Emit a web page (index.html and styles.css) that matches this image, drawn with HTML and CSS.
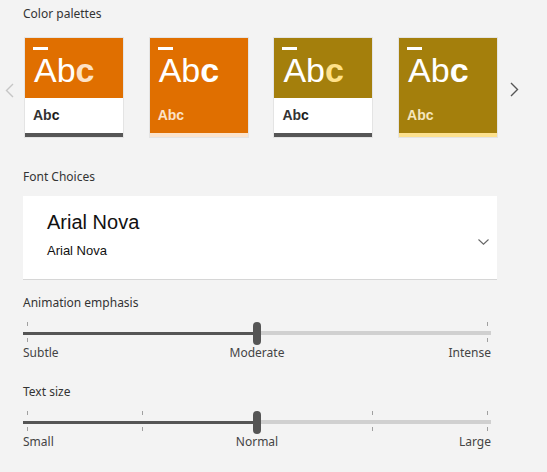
FILE: index.html
```html
<!DOCTYPE html>
<html>
<head>
<meta charset="utf-8">
<link rel="stylesheet" href="styles.css">
</head>
<body>
<div class="page">
  <div class="label">Color palettes</div>
  <div class="carousel">
    <div class="nav prev">
      <svg width="9" height="15" viewBox="0 0 9 15"><path d="M8 1 L1.5 7.5 L8 14" fill="none" stroke="#c6c6c6" stroke-width="1.4"/></svg>
    </div>
    <div class="cards">
      <div class="card">
        <div class="card-top orange">
          <div class="overline"></div>
          <div class="big">Ab<b class="c-peach">c</b></div>
        </div>
        <div class="card-bottom white"><span class="ab-dark">Ab</span><span class="c-dark">c</span></div>
        <div class="bar dark"></div>
      </div>
      <div class="card">
        <div class="card-top orange">
          <div class="overline"></div>
          <div class="big">Ab<b>c</b></div>
        </div>
        <div class="card-bottom orange"><span class="ab-peach">Ab</span><span class="ab-peach">c</span></div>
        <div class="bar peach"></div>
      </div>
      <div class="card">
        <div class="card-top olive">
          <div class="overline"></div>
          <div class="big">Ab<b class="c-yellow">c</b></div>
        </div>
        <div class="card-bottom white"><span class="ab-dark">Ab</span><span class="c-dark">c</span></div>
        <div class="bar dark"></div>
      </div>
      <div class="card">
        <div class="card-top olive">
          <div class="overline"></div>
          <div class="big">Ab<b>c</b></div>
        </div>
        <div class="card-bottom olive"><span class="ab-cream">Ab</span><span class="ab-cream">c</span></div>
        <div class="bar yellow"></div>
      </div>
    </div>
    <div class="nav next">
      <svg width="9" height="15" viewBox="0 0 9 15"><path d="M1 1 L7.5 7.5 L1 14" fill="none" stroke="#555" stroke-width="1.4"/></svg>
    </div>
  </div>

  <div class="label sec-font">Font Choices</div>
  <div class="font-card">
    <div class="fc-text">
      <div class="fc-big">Arial Nova</div>
      <div class="fc-small">Arial Nova</div>
    </div>
    <svg class="fc-chev" width="11" height="6" viewBox="0 0 11 6"><path d="M0.5 0.5 L5.5 5.2 L10.5 0.5" fill="none" stroke="#666" stroke-width="1.1"/></svg>
  </div>

  <div class="label sec-anim">Animation emphasis</div>
  <div class="slider">
    <div class="ticks top"><span class="tick"></span><span class="tick"></span></div>
    <div class="track"><div class="fill"></div><div class="rest"></div></div>
    <div class="ticks bottom"><span class="tick"></span><span class="tick"></span></div>
    <div class="thumb"></div>
  </div>
  <div class="slider-labels"><span class="sl-left">Subtle</span><span class="sl-mid">Moderate</span><span class="sl-right">Intense</span></div>

  <div class="label sec-text">Text size</div>
  <div class="slider">
    <div class="ticks top"><span class="tick"></span><span class="tick"></span><span class="tick"></span><span class="tick"></span><span class="tick"></span></div>
    <div class="track"><div class="fill"></div><div class="rest"></div></div>
    <div class="ticks bottom"><span class="tick"></span><span class="tick"></span><span class="tick"></span><span class="tick"></span><span class="tick"></span></div>
    <div class="thumb"></div>
  </div>
  <div class="slider-labels"><span class="sl-left">Small</span><span class="sl-mid">Normal</span><span class="sl-right">Large</span></div>
</div>
</body>
</html>
```
FILE: styles.css
```css
html, body {
  margin: 0;
  padding: 0;
  background: #f3f3f3;
}
body {
  width: 547px;
  height: 472px;
  overflow: hidden;
  font-family: "Noto Sans", "Open Sans", sans-serif;
}
.page {
  padding: 6px 0 0 23px;
}
.label {
  font-size: 12px;
  line-height: 16px;
  color: #333;
}
.carousel {
  display: flex;
  align-items: center;
  margin: 16px 0 0 -23px;
  height: 99px;
}
.nav {
  display: flex;
  align-items: center;
  height: 99px;
}
.prev {
  width: 25px;
  padding-left: 5px;
  box-sizing: border-box;
  margin-top: 5px;
}
.next {
  margin-left: 13px;
  margin-top: 4px;
}
.cards {
  display: flex;
  gap: 26.7px;
}
.card {
  width: 98px;
  height: 99px;
  display: flex;
  flex-direction: column;
  box-shadow: 0 0 0 1px rgba(0,0,0,0.06);
}
.card-top {
  height: 60px;
  box-sizing: border-box;
  padding: 9px 0 0 8px;
}
.overline {
  width: 15px;
  height: 3px;
  background: #fff;
}
.big {
  font-family: "Liberation Sans", Arial, sans-serif;
  font-size: 34px;
  line-height: 34px;
  margin: 3px 0 0 1px;
  color: #fff;
}
.big b { font-weight: 700; }
.card-bottom {
  height: 35px;
  box-sizing: border-box;
  padding: 9px 0 0 8px;
  font-family: "Liberation Sans", Arial, sans-serif;
  font-size: 14px;
  line-height: 16px;
  font-weight: 700;
}
.bar { height: 4px; }
.orange { background: #e06f00; }
.olive { background: #a47f0c; }
.white { background: #fff; }
.dark { background: #565656; }
.peach { background: #fce3cb; }
.yellow { background: #fde18e; }
.c-peach { color: #fde2c7; }
.c-yellow { color: #ffe18a; }
.ab-dark { color: #333; }
.c-dark { color: #1a1a1a; }
.ab-peach { color: #fbe2c9; }
.ab-cream { color: #f5e6bd; }

.sec-font { margin-top: 32px; }
.font-card {
  margin-top: 11px;
  width: 474px;
  height: 84px;
  box-sizing: border-box;
  background: #fff;
  border-bottom: 1px solid #d6d6d6;
  display: flex;
  justify-content: space-between;
  align-items: flex-start;
  padding: 14px 8px 0 24px;
}
.fc-big {
  font-family: "Liberation Sans", Arial, sans-serif;
  font-size: 20px;
  line-height: 24px;
  color: #111;
}
.fc-small {
  font-family: "Liberation Sans", Arial, sans-serif;
  font-size: 13px;
  line-height: 16px;
  color: #111;
  margin-top: 8.5px;
}
.fc-chev { margin-top: 29px; }

.sec-anim { margin-top: 15px; }
.sec-text { margin-top: 23px; }
.slider {
  position: relative;
  width: 468px;
  height: 23px;
  margin-top: 11px;
}
.ticks {
  display: flex;
  justify-content: space-between;
  padding: 0 3px 0 4px;
  height: 4px;
}
.ticks.top { margin-top: 1px; }
.ticks.bottom { margin-top: 3px; }
.tick {
  width: 1px;
  height: 4px;
  background: #a0a0a0;
}
.track {
  display: flex;
  align-items: center;
  height: 4px;
  margin-top: 5px;
}
.fill {
  width: 50%;
  height: 3px;
  background: #555;
}
.rest {
  flex: 1;
  height: 4px;
  background: #d0d0d0;
}
.thumb {
  position: absolute;
  left: 230px;
  top: 0;
  width: 8px;
  height: 23px;
  border-radius: 4px;
  background: #555;
}
.slider-labels {
  width: 468px;
  display: grid;
  grid-template-columns: 1fr auto 1fr;
  font-size: 12px;
  line-height: 16px;
  color: #444;
}
.sl-left { justify-self: start; }
.sl-mid { justify-self: center; }
.sl-right { justify-self: end; }
```
